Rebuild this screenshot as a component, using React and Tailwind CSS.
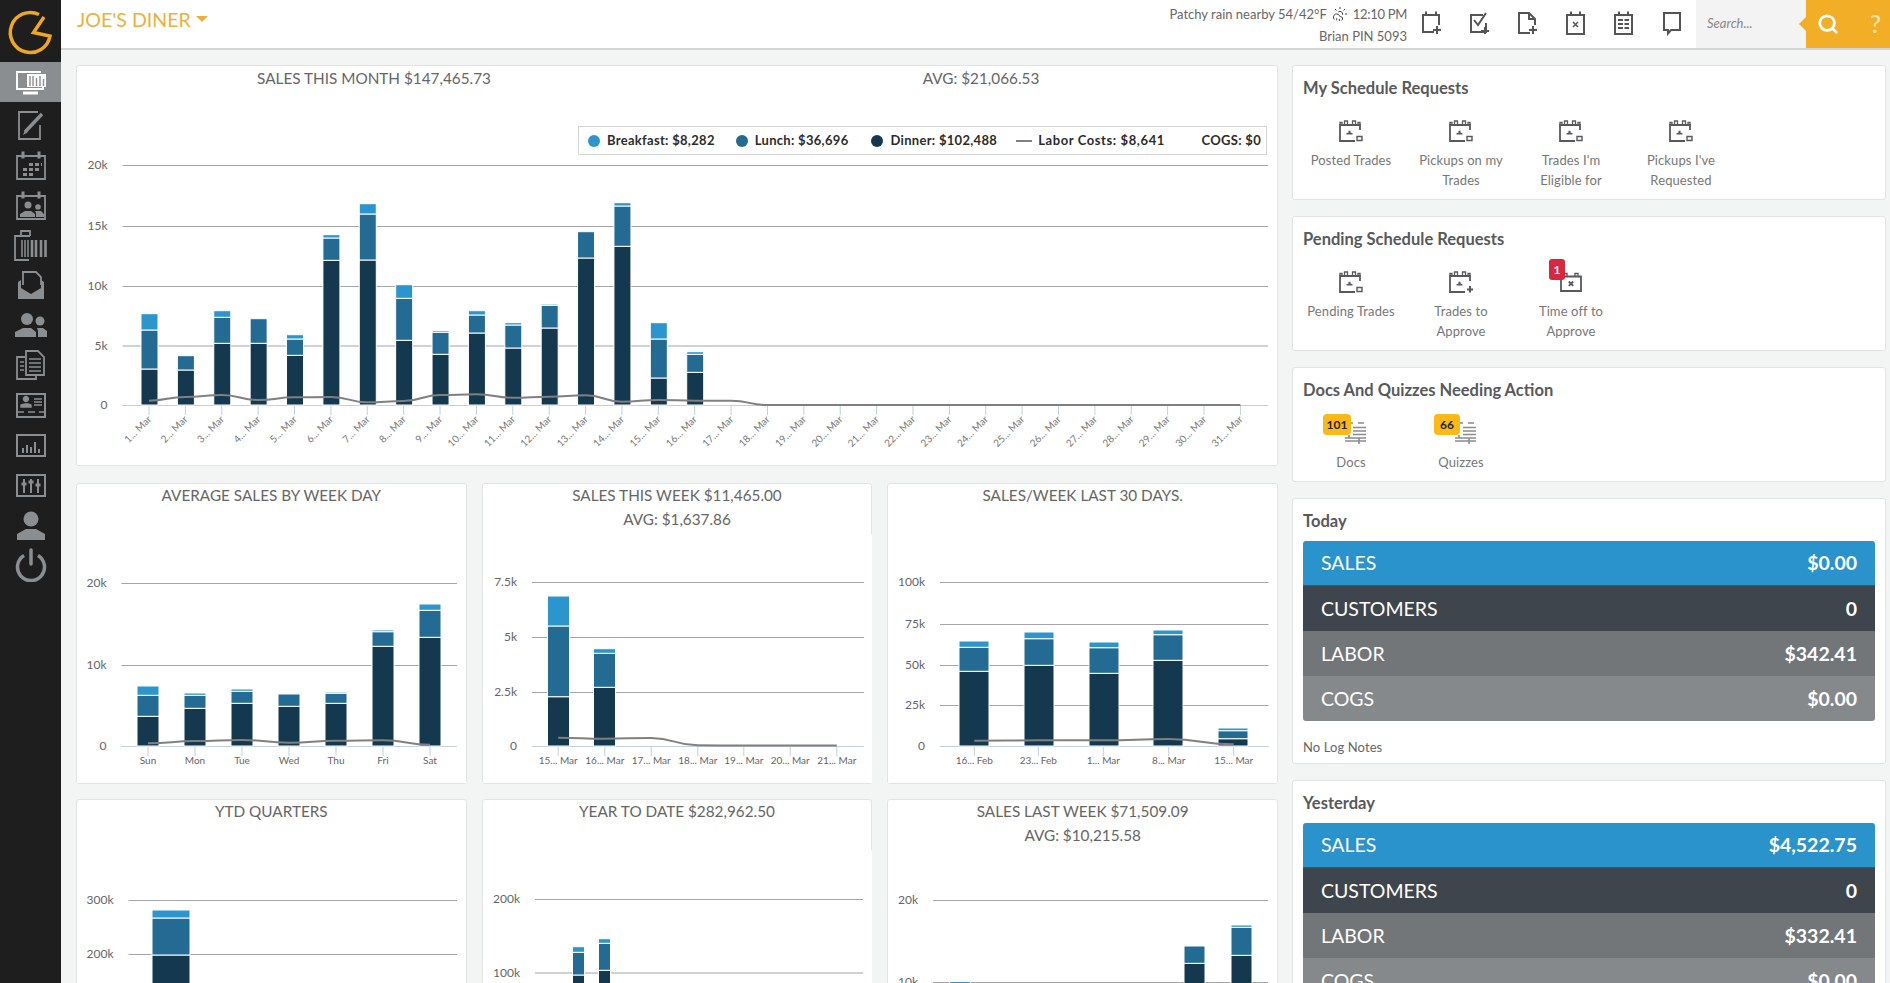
import React from "react";
import { Search, CloudSunRain } from "lucide-react";

const BLUE = "#2d95cd";
const MID = "#236b92";
const DARK = "#14394f";

// smooth line through the labor points
const smooth = (pts) =>
  pts
    .map((p, i) => {
      if (i === 0) return `M${p[0]} ${p[1]}`;
      const prev = pts[i - 1];
      const dx = (p[0] - prev[0]) / 2;
      return `C${prev[0] + dx} ${prev[1]} ${p[0] - dx} ${p[1]} ${p[0]} ${p[1]}`;
    })
    .join(" ");

// all chart numbers are page pixels, the group is shifted back by ox/oy
const StackChart = ({ ox, oy, height, left, right, axis, grid, ticks, labels, bars, line, tilt, over }) => (
  <svg height={height} className={`block bg-white ${over ? "w-[calc(100%+1px)]" : "w-full"}`}>
    <g transform={`translate(${-ox} ${-oy})`}>
      {grid.map(([label, y]) => (
        <g key={label}>
          <line x1={left} x2={right} y1={y + 0.5} y2={y + 0.5} stroke="#a3a5a6" />
          <text x={left - 15} y={y + 4} textAnchor="end" fontSize="12" fill="#666">{label}</text>
        </g>
      ))}
      <line x1={left} x2={right} y1={axis + 0.5} y2={axis + 0.5} stroke="#c0d0dc" />
      {ticks.map((x, i) => (
        <g key={x}>
          <line x1={x} x2={x} y1={axis} y2={axis + 10} stroke="#c0d0dc" />
          {labels && tilt && (
            <text x={x + 3} y={axis + 15} textAnchor="end" fontSize="10" fill="#777" transform={`rotate(-45 ${x + 3} ${axis + 15})`}>{labels[i]}</text>
          )}
          {labels && !tilt && (
            <text x={x} y={axis + 18} textAnchor="middle" fontSize="10" fill="#666">{labels[i]}</text>
          )}
        </g>
      ))}
      {bars.map((b) => {
        const cols = [DARK, MID, BLUE];
        return b.h.map((h, i) => {
          const prev = i ? b.h[i - 1] : 0;
          return (
            <rect key={b.x + "-" + i} x={b.x} y={axis - h} width={b.w} height={h - prev} fill={cols[i]} stroke="#fff" strokeWidth="1" />
          );
        });
      })}
      {line && (
        <path d={smooth(line.map((v, i) => [ticks[i], axis - v]))} fill="none" stroke="#808080" strokeWidth="2" />
      )}
    </g>
  </svg>
);

const ChartCard = ({ title, sub, children }) => (
  <div className="bg-white border border-[#e2e3e3] rounded-[3px]">
    <div className="h-[50px] -mt-px pb-px box-content text-center text-[15.3px] leading-6 text-[#666]">
      <div>{title}</div>
      {sub && <div>{sub}</div>}
    </div>
    {children}
  </div>
);

// month chart
const monthTicks = Array.from({ length: 31 }, (_, i) => 149 + i * 36.38);
const monthHeights = [
  [36, 75, 91.3], [35, 49.3], [61.7, 87.7, 94.3], [61.7, 86.3], [49.7, 66, 70.3], [144.7, 167, 170.3],
  [145, 191, 201.3], [64.7, 106.7, 120.3], [50.7, 72.7, 74.3], [72, 90, 94.3], [57, 80, 82.3], [77, 99.7, 101],
  [147, 173.3], [158.7, 199, 202.3], [27, 66, 82.3], [32.7, 50.7, 53.3],
];
const monthLine = [4.3, 8, 10, 5, 7.7, 8, 2.7, 4, 10, 10.7, 7.3, 8.3, 9.7, 3.3, 5, 4.3, 4.3, 0, 0, 0, 0, 0, 0, 0, 0, 0, 0, 0, 0, 0, 0];

const LegendDot = ({ color, label, className }) => (
  <div className={`flex items-center ${className}`}>
    <span className="w-3 h-3 rounded-full mr-[7px]" style={{ background: color }} />
    <span>{label}</span>
  </div>
);

const MonthCard = () => (
  <div className="relative bg-white border border-[#e2e3e3] rounded-[3px] h-[401px] overflow-hidden">
    <div className="grid grid-cols-2 text-center text-[15.3px] leading-6 text-[#666]">
      <div className="pr-[6px]">SALES THIS MONTH $147,465.73</div>
      <div className="pl-2">AVG: $21,066.53</div>
    </div>
    <StackChart
      ox={77}
      oy={90}
      height={375}
      left={122.5}
      right={1268}
      axis={405}
      grid={[["20k", 165], ["15k", 226], ["10k", 286], ["5k", 345.5], ["0", 405]]}
      ticks={monthTicks}
      labels={monthTicks.map((_, i) => `${i + 1}... Mar`)}
      tilt
      bars={monthHeights.map((h, i) => ({ x: monthTicks[i] - 8, w: 17, h }))}
      line={monthLine}
    />
    <div className="absolute left-[501px] top-[60px] w-[689px] h-[29px] bg-white border border-[#d4d6d6] flex items-center text-[13px] font-bold text-[#2c2c2c] tracking-[0.3px] pl-[9px]">
      <LegendDot color={BLUE} label="Breakfast: $8,282" />
      <LegendDot color={MID} label="Lunch: $36,696" className="ml-[21px]" />
      <LegendDot color={DARK} label="Dinner: $102,488" className="ml-[23px]" />
      <div className="flex items-center ml-[19px]">
        <span className="w-4 h-0.5 bg-[#808080] mr-[6px]" />
        <span className="tracking-[0.6px]">Labor Costs: $8,641</span>
      </div>
      <span className="ml-auto mr-[5px]">COGS: $0</span>
    </div>
  </div>
);

const dayBars = [
  [29.7, 50.7, 60], [37.7, 50.7, 53], [42.7, 54.7, 57], [39.7, 52], [42.7, 52.7, 54], [99.7, 114.3, 116], [108.7, 135.7, 142],
];
const weekTicks = [557.7, 604.3, 650.7, 697.3, 743.3, 789.7, 836.3];
const monthlyTicks = [974.3, 1038.3, 1103.3, 1168.7, 1233.7];

const SecondRow = () => (
  <div className="grid grid-cols-3 gap-[15px] mt-[17px] h-[301px]">
    <ChartCard title="AVERAGE SALES BY WEEK DAY">
      <StackChart
        ox={77}
        oy={534}
        height={249}
        left={121.5}
        right={457}
        axis={746}
        grid={[["20k", 583], ["10k", 665], ["0", 746]]}
        ticks={[148, 195, 242, 289, 336, 383, 430]}
        labels={["Sun", "Mon", "Tue", "Wed", "Thu", "Fri", "Sat"]}
        bars={dayBars.map((h, i) => ({ x: 137 + i * 47, w: 22, h }))}
        line={[2.7, 5, 6, 3.3, 5.3, 5.7, 1.3]}
      />
    </ChartCard>
    <ChartCard title="SALES THIS WEEK $11,465.00" sub="AVG: $1,637.86">
      <StackChart
        over
        ox={482.5}
        oy={534}
        height={249}
        left={531.5}
        right={863.5}
        axis={746}
        grid={[["7.5k", 582], ["5k", 637], ["2.5k", 692], ["0", 746]]}
        ticks={weekTicks}
        labels={["15... Mar", "16... Mar", "17... Mar", "18... Mar", "19... Mar", "20... Mar", "21... Mar"]}
        bars={[
          { x: 547, w: 22, h: [49.3, 120, 150] },
          { x: 593, w: 22, h: [58.7, 92.7, 97.3] },
        ]}
        line={[8.3, 7.3, 8, 0.7, 0.5, 0.5, 0.5]}
      />
    </ChartCard>
    <ChartCard title="SALES/WEEK LAST 30 DAYS.">
      <StackChart
        ox={888}
        oy={534}
        height={249}
        left={940}
        right={1268.5}
        axis={746}
        grid={[["100k", 582], ["75k", 624], ["50k", 665], ["25k", 705], ["0", 746]]}
        ticks={monthlyTicks}
        labels={["16... Feb", "23... Feb", "1... Mar", "8... Mar", "15... Mar"]}
        bars={[
          { x: 959, w: 30, h: [74.7, 98.7, 105] },
          { x: 1024, w: 30, h: [80.7, 107.3, 114] },
          { x: 1089, w: 30, h: [72.7, 98.3, 104] },
          { x: 1153, w: 30, h: [85.7, 111.3, 116] },
          { x: 1218, w: 30, h: [7.3, 15.3, 18] },
        ]}
        line={[5.3, 5.7, 5.7, 7, 1.7]}
      />
    </ChartCard>
  </div>
);

const ThirdRow = () => (
  <div className="grid grid-cols-3 gap-[15px] mt-[15px] h-[301px]">
    <ChartCard title="YTD QUARTERS">
      <StackChart
        ox={77}
        oy={850}
        height={249}
        left={128.5}
        right={457}
        axis={1062}
        grid={[["300k", 900], ["200k", 954], ["100k", 1008]]}
        ticks={[171]}
        bars={[{ x: 152, w: 38, h: [107, 144, 152] }]}
      />
    </ChartCard>
    <ChartCard title="YEAR TO DATE $282,962.50">
      <StackChart
        over
        ox={482.5}
        oy={850}
        height={249}
        left={534.5}
        right={862.5}
        axis={1046}
        grid={[["200k", 899], ["100k", 972.5]]}
        ticks={[578, 604]}
        bars={[
          { x: 572, w: 12, h: [71, 93.7, 99.3] },
          { x: 598, w: 12, h: [75.7, 102.7, 107.3] },
        ]}
      />
    </ChartCard>
    <ChartCard title="SALES LAST WEEK $71,509.09" sub="AVG: $10,215.58">
      <StackChart
        ox={888}
        oy={850}
        height={249}
        left={933}
        right={1268}
        axis={1063}
        grid={[["20k", 900], ["10k", 982]]}
        ticks={[960, 1194, 1241]}
        bars={[
          { x: 949.5, w: 21, h: [60, 78, 81.5] },
          { x: 1184, w: 21, h: [99.7, 117] },
          { x: 1231, w: 21, h: [107.7, 135.7, 138] },
        ]}
      />
    </ChartCard>
  </div>
);

/* ---------- right column ---------- */

const CalIcon = ({ kind = "corner" }) => (
  <svg width="26" height="22" viewBox="0 0 26 22" fill="none" stroke="#58595b" strokeWidth="1.800">
    <path d="M22 10V5H2v16h15" />
    <path d="M2 5V2.500h2V5M6.500 5V1h3v4M14.500 5V1h3v4M20 5V2.500h2V5" strokeWidth="1.300" />
    {kind !== "x" && <path d="M8.500 14.500h6v-1.200l-2-.800v-1.800h-2v1.800l-2 .800z" fill="#58595b" stroke="none" />}
    {kind === "corner" && <path d="M19 20.500v-4h5v4z" strokeWidth="1.400" />}
    {kind === "plus" && <path d="M22 15v6.500M19 18.500h6" strokeWidth="2" />}
  </svg>
);

const XCalIcon = () => (
  <svg width="22" height="20" viewBox="0 0 22 20" fill="none" stroke="#58595b" strokeWidth="1.800">
    <path d="M1 4.500h20V19H1z" />
    <path d="M4 4.500V1.500h3v3M15 4.500V1.500h3v3" strokeWidth="1.300" />
    <path d="M8.800 9.500l4.400 4.400M13.200 9.500l-4.400 4.400" />
  </svg>
);

const ListIcon = () => (
  <svg width="21" height="24" viewBox="0 0 21 24" fill="none" stroke="#8a8c8e" strokeWidth="1.600">
    <path d="M0 2h8M13 2h6M8 6.500h13M8 10h13M8 13.500h13M0 17h21M4 17v-3M14 17v6M0 20h21" />
  </svg>
);

const Tile = ({ lines, children }) => (
  <div className="w-[110px] text-center text-[13px] tracking-[0.1px] leading-5 text-[#777]">
    <div className="relative h-[38px] flex items-center justify-center">{children}</div>
    {lines.map((t) => (
      <div key={t}>{t}</div>
    ))}
  </div>
);

const PanelTitle = ({ children }) => (
  <h3 className="text-[16.5px] leading-6 font-bold text-[#58595b]">{children}</h3>
);

const RequestCard = ({ title, children }) => (
  <div className="bg-white border border-[#e2e3e3] rounded-[3px] px-[10px] pt-[10px] pb-[9px] mb-4">
    <PanelTitle>{title}</PanelTitle>
    <div className="flex mt-3 -ml-[7px]">{children}</div>
  </div>
);

const StatRow = ({ label, value, className }) => (
  <div className={`h-[45px] flex items-center justify-between px-[18px] text-white text-[19.5px] ${className}`}>
    <span>{label}</span>
    <span className="font-bold">{value}</span>
  </div>
);

const DayCard = ({ title, stats, note }) => (
  <div className="bg-white border border-[#e2e3e3] rounded-[3px] px-[10px] pt-[10px] pb-[6px] mb-4">
    <PanelTitle>{title}</PanelTitle>
    <div className="mt-2 rounded-[3px] overflow-hidden">
      <StatRow label="SALES" value={stats[0]} className="bg-[#2b93cb] border-b border-[#1d5f85]" />
      <StatRow label="CUSTOMERS" value={stats[1]} className="bg-[#3f454c]" />
      <StatRow label="LABOR" value={stats[2]} className="bg-[#737679]" />
      <StatRow label="COGS" value={stats[3]} className="bg-[#86898b]" />
    </div>
    <div className="mt-4 text-[13px] tracking-[0.1px] leading-5 text-[#666]">{note}</div>
  </div>
);

const RightColumn = () => (
  <div className="w-[594px] shrink-0">
    <RequestCard title="My Schedule Requests">
      <Tile lines={["Posted Trades"]}><CalIcon /></Tile>
      <Tile lines={["Pickups on my", "Trades"]}><CalIcon /></Tile>
      <Tile lines={["Trades I'm", "Eligible for"]}><CalIcon /></Tile>
      <Tile lines={["Pickups I've", "Requested"]}><CalIcon /></Tile>
    </RequestCard>
    <RequestCard title="Pending Schedule Requests">
      <Tile lines={["Pending Trades"]}><CalIcon /></Tile>
      <Tile lines={["Trades to", "Approve"]}><CalIcon kind="plus" /></Tile>
      <Tile lines={["Time off to", "Approve"]}>
        <XCalIcon />
        <span className="absolute left-[33px] top-[-4px] w-4 h-[21px] rounded-[3px] bg-[#d9273f] text-white text-[12px] leading-[21px] font-bold">1</span>
      </Tile>
    </RequestCard>
    <RequestCard title="Docs And Quizzes Needing Action">
      <Tile lines={["Docs"]}>
        <span className="ml-2"><ListIcon /></span>
        <span className="absolute left-[27px] top-0 w-[28px] h-[21px] rounded-[4px] bg-[#fbb917] text-[#222] text-[12px] leading-[21px] font-bold">101</span>
      </Tile>
      <Tile lines={["Quizzes"]}>
        <span className="ml-2"><ListIcon /></span>
        <span className="absolute left-[28px] top-0 w-[26px] h-[21px] rounded-[4px] bg-[#fbb917] text-[#222] text-[12px] leading-[21px] font-bold">66</span>
      </Tile>
    </RequestCard>
    <DayCard title="Today" stats={["$0.00", "0", "$342.41", "$0.00"]} note="No Log Notes" />
    <DayCard title="Yesterday" stats={["$4,522.75", "0", "$332.41", "$0.00"]} note="No Log Notes" />
  </div>
);

/* ---------- header ---------- */

const HeadIcon = ({ children }) => (
  <div className="w-12 flex justify-center">
    <svg width="22" height="26" viewBox="0 0 22 26" fill="none" stroke="#555" strokeWidth="2">
      {children}
    </svg>
  </div>
);

const Header = () => (
  <div className="h-[50px] shrink-0 bg-white border-b-2 border-[#d3d4d4] flex">
    <div className="pl-4 h-full pb-[8px] flex items-center text-[19.6px] text-[#ecb13c]">
      JOE'S DINER
      <span className="ml-[5px] mb-[3px] w-0 h-0 border-x-[6px] border-x-transparent border-t-[6px] border-t-[#ecb13c]" />
    </div>
    <div className="ml-auto mr-[1px] pt-[3px] text-right text-[13px] leading-[22px] text-[#666]">
      <div className="flex items-center justify-end">
        Patchy rain nearby 54/42°F
        <CloudSunRain size={16} strokeWidth={1.5} color="#444" className="mx-[5px]" />
        <span className="tracking-[-0.3px]">12:10 PM</span>
      </div>
      <div>Brian PIN 5093</div>
    </div>
    <div className="flex items-center pb-[2px] w-[288px]">
      <HeadIcon>
        <path d="M13 22H2V5h16v10M5 5V1.500M15 5V1.500M16 16v8M12 20h8" />
      </HeadIcon>
      <HeadIcon>
        <path d="M17 13v9H2V5h12M5 10l4 5 8-12M16 17v7M12 21h8" />
      </HeadIcon>
      <HeadIcon>
        <path d="M13 23H2V3h10l6 6v6M12 3v6h6M16 16v8M12 20h8" />
      </HeadIcon>
      <HeadIcon>
        <path d="M2 5h17v19H2zM6 5V1.500M15 5V1.500" />
        <path d="M8 12l5 5M13 12l-5 5" strokeWidth="1.500" />
      </HeadIcon>
      <HeadIcon>
        <path d="M2 5h17v19H2zM6 5V1.500M15 5V1.500M5 10h5M11.500 10h4.500M5 14h5M11.500 14h4.500M5 18h5M11.500 18h4.500" />
      </HeadIcon>
      <HeadIcon>
        <path d="M3 3h16v17h-9l-3 3.500V20H3z" />
      </HeadIcon>
    </div>
    <div className="w-[110px] h-12 bg-[#f3f3f3] pl-[11px] flex items-center text-[13px] italic text-[#888]">Search...</div>
    <div className="relative w-[84px] h-12 bg-[#f2ae27] flex items-center">
      <span className="absolute -left-[7px] top-[17px] w-0 h-0 border-y-[7px] border-y-transparent border-r-[7px] border-r-[#f2ae27]" />
      <Search size={22} strokeWidth={3} color="#fff" className="ml-[11px]" />
      <span className="ml-auto mr-[9px] text-[25px] font-medium text-[#fbe3ae]">?</span>
    </div>
  </div>
);

/* ---------- sidebar ---------- */

const SideIcon = ({ children, active }) => (
  <div className={`h-10 flex items-center justify-center ${active ? "bg-[#8b8e90] text-white mb-[3px]" : "text-[#8b8e90]"}`}>
    <svg width="34" height="34" viewBox="0 0 34 34" fill="none" stroke="currentColor" strokeWidth="1.500">
      {children}
    </svg>
  </div>
);

const Sidebar = () => (
  <div className="w-[61px] shrink-0 bg-[#1e1e1e] h-full">
    <div className="h-[62px] flex items-start justify-center">
      <svg width="61" height="62" viewBox="0 0 61 62" fill="none" stroke="#eea722" strokeWidth="3.500">
        <path d="M39 14.500A20 20 0 1 0 50 36L33.500 32.500 44 17" />
      </svg>
    </div>
    <SideIcon active>
      <path d="M27 7H3v17h26v-3" strokeWidth="2" />
      <path d="M9 28h15" strokeWidth="3" />
      <path d="M13 9h19v13H13z" fill="currentColor" stroke="none" />
      <path d="M16 11v10M19 11v10M22.500 13v8M26 11v10M29.500 14v7" stroke="#8b8e90" strokeWidth="1.400" />
    </SideIcon>
    <SideIcon>
      <path d="M24 4H5v27h21V17" strokeWidth="1.800" />
      <path d="M11 24L28 6" strokeWidth="3.500" />
      <path d="M9 27l2-5 2.500 2.500z" fill="currentColor" stroke="none" />
    </SideIcon>
    <SideIcon>
      <path d="M3 8h28v23H3z" strokeWidth="1.800" />
      <path d="M9 3.500v7M25 3.500v7" strokeWidth="3" />
      <path d="M15 15h4v3h-4zM21 15h4v3h-4zM27 15h1v3h-1zM9 20h4v3H9zM15 20h4v3h-4zM21 20h4v3h-4zM9 25h4v3H9zM15 25h4v3h-4z" fill="currentColor" stroke="none" />
    </SideIcon>
    <SideIcon>
      <path d="M3 8h28v23H3z" strokeWidth="1.800" />
      <path d="M9 3.500v7M25 3.500v7" strokeWidth="3" />
      <circle cx="14" cy="17" r="3.500" fill="currentColor" stroke="none" />
      <circle cx="24" cy="19" r="2.800" fill="currentColor" stroke="none" />
      <path d="M6 29v-3l5-3h6l4 3v3zM22 29v-4l-1-2h6l3 3v3z" fill="currentColor" stroke="none" />
    </SideIcon>
    <SideIcon>
      <path d="M13 8H1v24h14" strokeWidth="1.800" />
      <path d="M7 8V3h9v5M2 8h14" strokeWidth="1.800" />
      <path d="M8 12v17M11 12v17M14 12v17" strokeWidth="1.500" />
      <path d="M18 12v17M22 12v17M27 12v17M31.500 12v17" strokeWidth="2.600" />
    </SideIcon>
    <SideIcon>
      <path d="M9 17V4h13l5 5v8" strokeWidth="1.800" />
      <path d="M4 14v17h26V14l-3-2v8l-10 6-10-6v-8z" fill="currentColor" stroke="none" />
    </SideIcon>
    <SideIcon>
      <circle cx="13" cy="11" r="6" fill="currentColor" stroke="none" />
      <path d="M1 29v-5l8-4h8l5 4v5z" fill="currentColor" stroke="none" />
      <circle cx="26" cy="13" r="4.500" fill="currentColor" stroke="none" />
      <path d="M24 29v-6l-1-3h6l4 3v6z" fill="currentColor" stroke="none" />
    </SideIcon>
    <SideIcon>
      <path d="M11 9H3v22h19v-4" strokeWidth="1.800" />
      <path d="M12 3h12l6 6v18H12z" strokeWidth="1.800" />
      <path d="M15 11h12M15 15h12M15 19h12M15 23h12M6 14h4M6 18h4M6 22h4" strokeWidth="1.400" />
    </SideIcon>
    <SideIcon>
      <path d="M3 6h28v23H3z" strokeWidth="2" />
      <path d="M12 8.500a2.500 2.500 0 1 1-.1 0zM7 19v-2l4-1h3l3 1v2zM20 11h8M20 14h8M20 17h8M3 24h7M14 24h7M25 24h6" fill="currentColor" strokeWidth="1.400" />
    </SideIcon>
    <SideIcon>
      <path d="M3 7h28v21H3z" strokeWidth="2" />
      <path d="M9 25v-5M13 25v-8M17 25v-6M21 25v-11M25 25v-4" strokeWidth="2" />
    </SideIcon>
    <SideIcon>
      <path d="M3 7h28v21H3z" strokeWidth="2" />
      <path d="M10 11v14M17 11v14M24 11v14" strokeWidth="2" />
      <path d="M7.500 16h5M14.500 14h5M21.500 17h5" strokeWidth="3" />
    </SideIcon>
    <SideIcon>
      <circle cx="17" cy="11" r="7.500" fill="currentColor" stroke="none" />
      <path d="M3 32v-6l9-5h10l9 5v6z" fill="currentColor" stroke="none" />
    </SideIcon>
    <SideIcon>
      <path d="M17 2v14" strokeWidth="3.500" strokeLinecap="round" />
      <path d="M10 7.500a13.500 13.500 0 1 0 14 0" strokeWidth="3.500" />
    </SideIcon>
  </div>
);

export default function App() {
  return (
    <div className="flex h-[983px] overflow-hidden bg-[#f3f4f4] font-['Lato',sans-serif]">
      <Sidebar />
      <div className="flex-1 min-w-0 flex flex-col">
        <Header />
        <div className="flex-1 min-h-0 overflow-hidden flex gap-[14px] pl-[15px] pt-[15px]">
          <div className="w-[1202px] shrink-0">
            <MonthCard />
            <SecondRow />
            <ThirdRow />
          </div>
          <RightColumn />
        </div>
      </div>
    </div>
  );
}
